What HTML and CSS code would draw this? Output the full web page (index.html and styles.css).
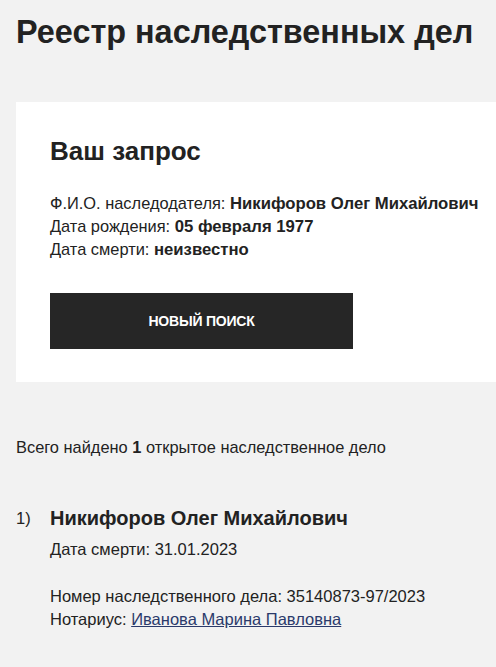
FILE: index.html
```html
<!DOCTYPE html>
<html lang="ru">
<head>
<meta charset="utf-8">
<link rel="stylesheet" href="styles.css">
</head>
<body>
<div class="page">
  <h1 class="title">Реестр наследственных дел</h1>
  <section class="card">
    <h2 class="card-title">Ваш запрос</h2>
    <div class="query">
      <div>Ф.И.О. наследодателя: <b>Никифоров Олег Михайлович</b></div>
      <div>Дата рождения: <b>05 февраля 1977</b></div>
      <div>Дата смерти: <b>неизвестно</b></div>
    </div>
    <button class="btn">НОВЫЙ ПОИСК</button>
  </section>
  <p class="summary">Всего найдено <b>1</b> открытое наследственное дело</p>
  <div class="result">
    <div class="num">1)</div>
    <div class="body">
      <div class="name">Никифоров Олег Михайлович</div>
      <div class="death">Дата смерти: 31.01.2023</div>
      <div class="case">
        <div>Номер наследственного дела: 35140873-97/2023</div>
        <div>Нотариус: <a href="#" class="link">Иванова Марина Павловна</a></div>
      </div>
    </div>
  </div>
</div>
</body>
</html>
```
FILE: styles.css
```css
html, body {
  margin: 0;
  padding: 0;
  background: #f2f2f2;
}
body {
  font-family: "Liberation Sans", Arial, sans-serif;
  color: #222;
  width: 496px;
  overflow: hidden;
}
.page {
  padding: 0 0 0 16px;
}
.title {
  font-size: 32.4px;
  font-weight: 700;
  line-height: 40px;
  margin: 0;
  padding-top: 12px;
  color: #222;
}
.card {
  background: #fff;
  margin-top: 50px;
  padding: 32px 0 33px 34px;
}
.card-title {
  font-size: 26px;
  font-weight: 700;
  line-height: 34px;
  margin: 0 0 24px;
}
.query {
  font-size: 16.4px;
  line-height: 22px;
}
.query b { font-weight: 700; font-size: 16.7px; }
.btn {
  margin-top: 32px;
  display: block;
  width: 303px;
  height: 56px;
  background: #262626;
  color: #fff;
  border: 0;
  font-family: "Liberation Sans", Arial, sans-serif;
  font-weight: 700;
  font-size: 14px;
  letter-spacing: -0.2px;
}
.summary {
  margin: 54px 0 0;
  font-size: 16.4px;
  line-height: 22px;
}
.summary b { font-weight: 700; }
.result {
  display: flex;
  margin-top: 47px;
}
.num {
  width: 34px;
  font-size: 16.5px;
  line-height: 26px;
}
.name {
  font-size: 20px;
  font-weight: 700;
  line-height: 26px;
}
.death {
  font-size: 16.5px;
  line-height: 22px;
  margin-top: 7px;
}
.case {
  font-size: 16.5px;
  line-height: 23px;
  margin-top: 25px;
}
.link {
  color: #2b3a6b;
  text-decoration: underline;
}
```
